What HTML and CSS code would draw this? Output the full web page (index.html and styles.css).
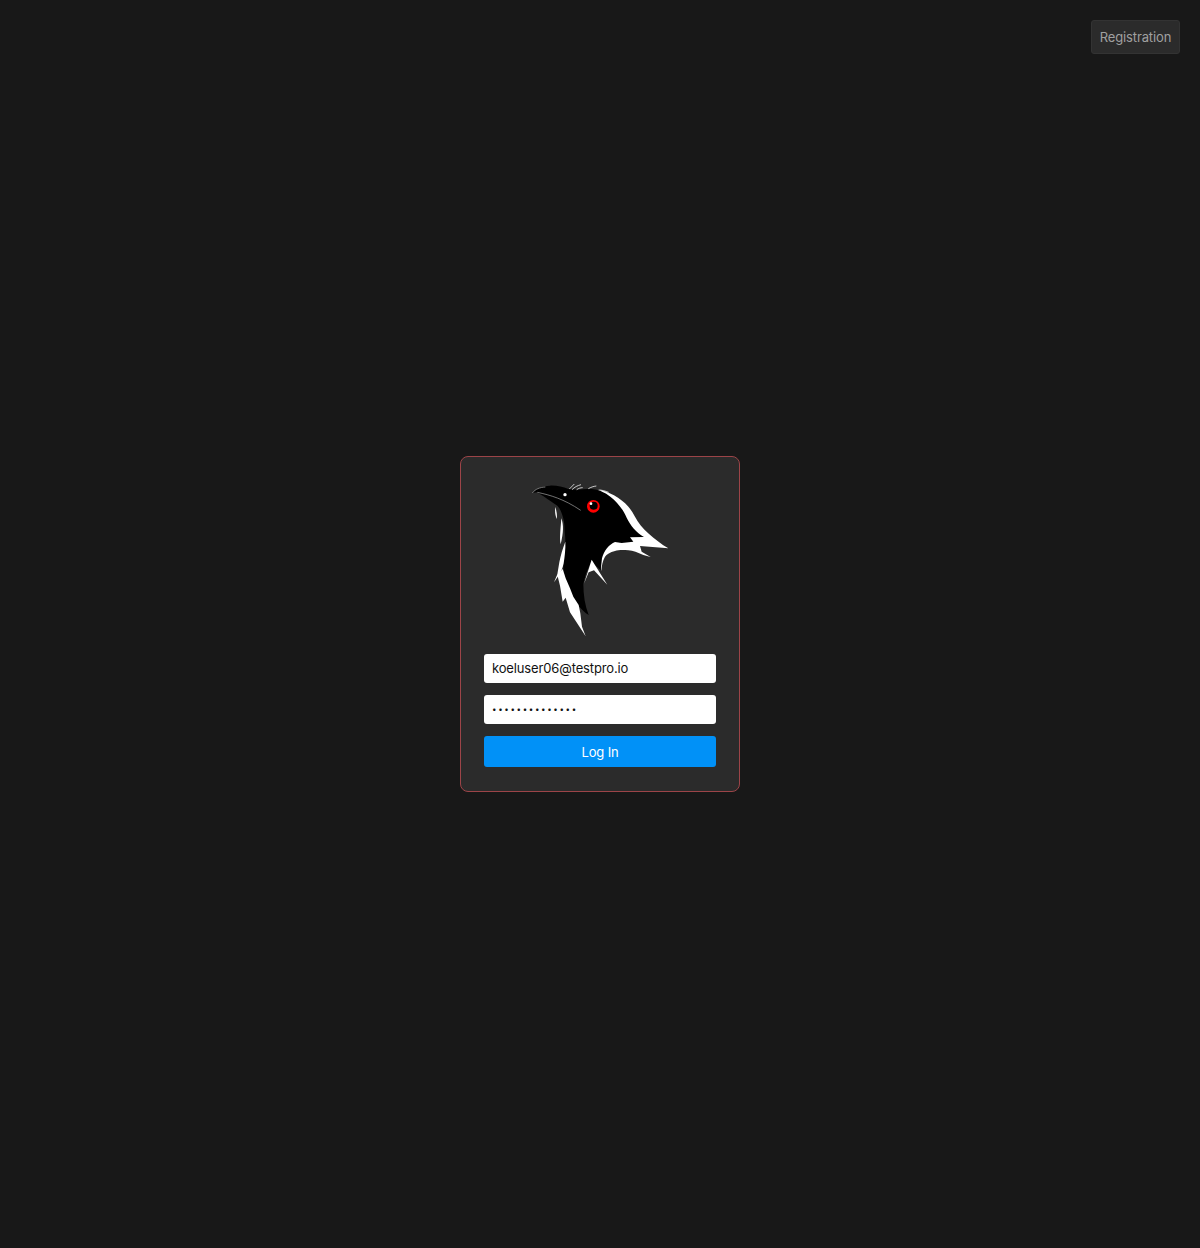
FILE: index.html
```html
<!DOCTYPE html>
<html lang="en">
<head>
<meta charset="utf-8">
<title>Koel</title>
<link rel="stylesheet" href="styles.css">
</head>
<body>
<a class="register" href="#">Registration</a>
<form class="card">
  <svg class="logo" viewBox="0 0 480 510" aria-hidden="true">
    <path class="w" d="M240 44C290 58 325 85 345 125C362 160 405 195 445 220L360 213L365 230L392 246L370 240C352 233 340 227 325 226C310 224 296 224 285 228C270 232 260 238 255 245C248 258 245 272 244 288C238 262 240 232 262 212L285 198L330 186Z"/>
    <path class="k" d="M37 54C48 40 66 33 90 32C110 31 128 36 145 42C165 46 190 42 215 42C235 44 255 52 272 66C292 82 310 104 320 128C332 152 348 172 372 186L330 187L340 200L305 204L285 201C268 208 252 226 246 250L242 286L222 268L215 256L198 296L190 326C190 360 195 392 206 420C185 405 165 385 150 350C135 315 128 285 130 260C136 230 138 200 134 170C134 150 132 125 118 100L112 92C95 82 70 62 50 52Z"/>
    <path class="w" d="M192 326L215 254L262 329L222 286L206 292Z"/>
    <path class="w" d="M112 300L128 282L137 310L150 340L160 365L176 390L181 415L186 455L197 484L150 412L137 368L128 380L120 332Z"/>
    <path class="w" d="M136 200C128 222 122 240 118 262L112 298L102 322C114 305 126 290 131 265C134 245 137 222 136 200Z"/>
    <path class="w" d="M124 130C131 150 131 172 122 208C118 190 122 160 124 130Z"/>
    <path class="w" d="M106 96C110 110 112 122 110 132C106 122 104 110 106 96Z"/>
    <path class="g" d="M37 54C46 42 60 37 76 36"/>
    <path class="g" d="M52 52C90 60 132 72 182 106"/>
    <path class="s" d="M148 42L163 27M156 44C164 36 172 32 183 29M170 44C176 40 182 38 188 38M205 41C212 37 220 34 229 33M236 45C246 45 256 48 266 52"/>
    <circle class="w" cx="135" cy="59" r="5"/>
    <circle class="r" cx="220" cy="94" r="19"/>
    <circle class="k" cx="221" cy="92" r="12"/>
    <circle class="w" cx="213" cy="86" r="4"/>
  </svg>
  <input class="field" type="email" value="koeluser06@testpro.io" placeholder="Email Address">
  <input class="field field-secret" type="password" value="koeluser06pass" placeholder="Password">
  <button class="submit" type="button">Log In</button>
</form>
</body>
</html>
```
FILE: styles.css
```css
* { box-sizing: border-box; }
html, body { height: 100%; }
body {
  margin: 0;
  background: #181818;
  font-family: Inter, "Liberation Sans", sans-serif;
  display: flex;
  align-items: center;
  justify-content: center;
}
.register {
  position: absolute;
  top: 20px;
  right: 20px;
  width: 89px;
  height: 34px;
  display: flex;
  align-items: center;
  justify-content: center;
  background: #2b2b2b;
  border: 1px solid #333;
  border-radius: 3px;
  color: #a0a0a0;
  font-size: 13px;
  letter-spacing: -0.14px;
  text-decoration: none;
}
.card {
  width: 280px;
  height: 336px;
  padding: 18px 23px 24px;
  display: flex;
  flex-direction: column;
  background: #2b2b2b;
  border: 1px solid #9c4448;
  border-radius: 8px;
}
.logo {
  display: block;
  width: 160px;
  height: 170px;
  margin: 0 auto 9px;
  flex: none;
}
.w { fill: #fff; }
.k { fill: #000; }
.r { fill: #f00; }
.g { fill: none; stroke: #aaa; stroke-width: 2; }
.s { fill: none; stroke: #e8e8e8; stroke-width: 2.5; }
.field {
  height: 29px;
  padding: 0 8px 1px;
  margin-bottom: 12px;
  background: #fff;
  border: 0;
  border-radius: 3px;
  color: #111;
  font-family: inherit;
  font-size: 13px;
  letter-spacing: -0.14px;
  outline: none;
}
.field-secret {
  font-size: 8px;
  letter-spacing: 1.63px;
}
.submit {
  height: 31px;
  background: #0191f7;
  border: 0;
  border-radius: 3px;
  color: #fff;
  font-family: inherit;
  font-size: 13px;
  letter-spacing: -0.14px;
}
```
